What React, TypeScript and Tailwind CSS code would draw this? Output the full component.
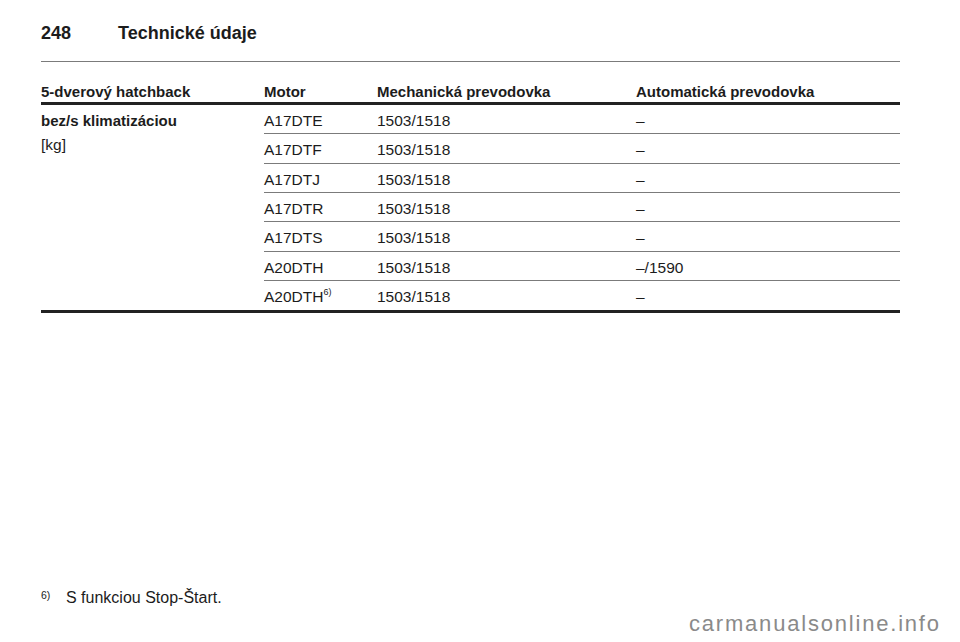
import React from "react";

const rows = [
    { motor: "A17DTE", mech: "1503/1518", auto: "–" },
    { motor: "A17DTF", mech: "1503/1518", auto: "–" },
    { motor: "A17DTJ", mech: "1503/1518", auto: "–" },
    { motor: "A17DTR", mech: "1503/1518", auto: "–" },
    { motor: "A17DTS", mech: "1503/1518", auto: "–" },
    { motor: "A20DTH", mech: "1503/1518", auto: "–/1590" },
    { motor: "A20DTH", sup: "6)", mech: "1503/1518", auto: "–" },
];

const App = () => {
    return (
        <div
            className="relative h-[642px] w-[960px] overflow-hidden bg-white text-[#1c1c1c]"
            style={{ fontFamily: '"Liberation Sans", Arial, sans-serif' }}
        >
            <div className="flex w-[900px] flex-col pl-[41px] pt-[22px]">
                {/* page heading */}
                <div className="flex h-[22px] items-center text-[18px] font-bold leading-[22px]">
                    <span className="w-[77px]">248</span>
                    <span>Technické údaje</span>
                </div>
                <div className="mt-[17px] h-px bg-[#7b7b7b]" />

                {/* table head */}
                <div className="mt-[20px] flex border-b-[3px] border-[#222] text-[15px] font-bold leading-[20px]">
                    <div className="w-[223px]">5-dverový hatchback</div>
                    <div className="w-[113px]">Motor</div>
                    <div className="w-[259px]">Mechanická prevodovka</div>
                    <div className="flex-1">Automatická prevodovka</div>
                </div>

                {/* table body */}
                <div className="flex border-b-[3px] border-[#222]">
                    <div className="w-[223px] pt-[6px]">
                        <div className="text-[15px] font-bold leading-[20px]">bez/s klimatizáciou</div>
                        <div className="mt-[4px] text-[15.5px] leading-[20px]">[kg]</div>
                    </div>
                    <div className="flex flex-1 flex-col">
                        {rows.map((r, i) => (
                            <div
                                key={i}
                                className={
                                    i < rows.length - 1
                                        ? "flex h-[29.33px] border-b border-[#7b7b7b] pt-[6px] text-[15.5px] leading-[20px]"
                                        : "flex h-[29px] pt-[6px] text-[15.5px] leading-[20px]"
                                }
                            >
                                <div className="w-[113px]">
                                    {r.motor}
                                    {r.sup && <sup className="top-[-7px] align-baseline text-[9px]">{r.sup}</sup>}
                                </div>
                                <div className="w-[259px]">{r.mech}</div>
                                <div className="flex-1">{r.auto}</div>
                            </div>
                        ))}
                    </div>
                </div>
            </div>

            {/* footnote */}
            <div className="absolute left-[41px] top-[588px] flex text-[16px] leading-[20px]">
                <span className="w-[25px] pt-[1px] text-[10.5px] leading-[12px]">6)</span>
                <span>S funkciou Stop-Štart.</span>
            </div>

            {/* watermark */}
            <div className="absolute left-[689px] top-[612px] text-[22px] leading-[24px] tracking-[1.8px] text-[#8a8a8a]">
                carmanualsonline.info
            </div>
        </div>
    );
};

export default App;
